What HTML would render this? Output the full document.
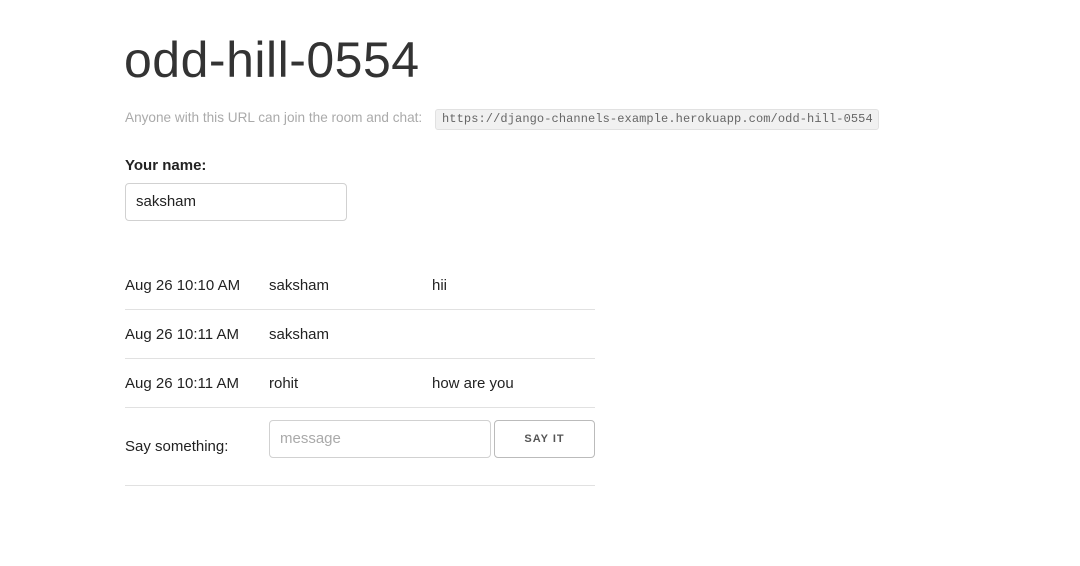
<!DOCTYPE html>
<html><head><meta charset="utf-8"><style>
body{margin:0;background:#fff;font-family:"Liberation Sans",sans-serif;color:#222;width:1080px;height:566px;position:relative;overflow:hidden}
.a{position:absolute;white-space:nowrap}
h1{position:absolute;left:124px;top:28px;margin:0;font-weight:300;font-size:50px;letter-spacing:0.5px;color:#333;line-height:64px}
.sub{left:125px;top:110px;font-size:13.6px;color:#aaa}
code{position:absolute;left:435px;top:109px;height:19px;width:442px;box-sizing:content-box;border:1px solid #e1e1e1;background:#f1f1f1;border-radius:3px;font-family:"Liberation Mono",monospace;font-size:12px;color:#666;line-height:19px;padding-left:0;text-indent:6px;letter-spacing:0.1px}
.lab{left:125px;top:157px;font-size:15px;font-weight:bold;color:#222}
.inp{position:absolute;border:1px solid #d1d1d1;border-radius:4px;box-sizing:border-box;font-size:15px;line-height:36px;padding-left:10px}
.line{position:absolute;left:125px;width:470px;height:1px;background:#e1e1e1}
.r{font-size:15px;color:#222}
.btn{position:absolute;left:494px;top:420px;width:101px;height:38px;box-sizing:border-box;border:1px solid #bbb;border-radius:4px;font-size:11px;font-weight:bold;letter-spacing:1px;color:#555;text-align:center;line-height:36px}
</style></head><body>
<h1>odd-hill-0554</h1>
<div class="a sub">Anyone with this URL can join the room and chat:</div>
<code>https://django-channels-example.herokuapp.com/odd-hill-0554</code>
<div class="a lab">Your name:</div>
<div class="inp" style="left:125px;top:183px;width:222px;height:38px;color:#222">saksham</div>
<div class="a r" style="left:125px;top:277px">Aug 26 10:10 AM</div>
<div class="a r" style="left:269px;top:277px">saksham</div>
<div class="a r" style="left:432px;top:277px">hii</div>
<div class="line" style="top:309px"></div>
<div class="a r" style="left:125px;top:326px">Aug 26 10:11 AM</div>
<div class="a r" style="left:269px;top:326px">saksham</div>
<div class="line" style="top:358px"></div>
<div class="a r" style="left:125px;top:375px">Aug 26 10:11 AM</div>
<div class="a r" style="left:269px;top:375px">rohit</div>
<div class="a r" style="left:432px;top:375px">how are you</div>
<div class="line" style="top:407px"></div>
<div class="a r" style="left:125px;top:438px">Say something:</div>
<div class="inp" style="left:269px;top:420px;width:222px;height:38px;color:#aaa;line-height:36px">message</div>
<div class="btn">SAY IT</div>
<div class="line" style="top:485px"></div>
</body></html>
